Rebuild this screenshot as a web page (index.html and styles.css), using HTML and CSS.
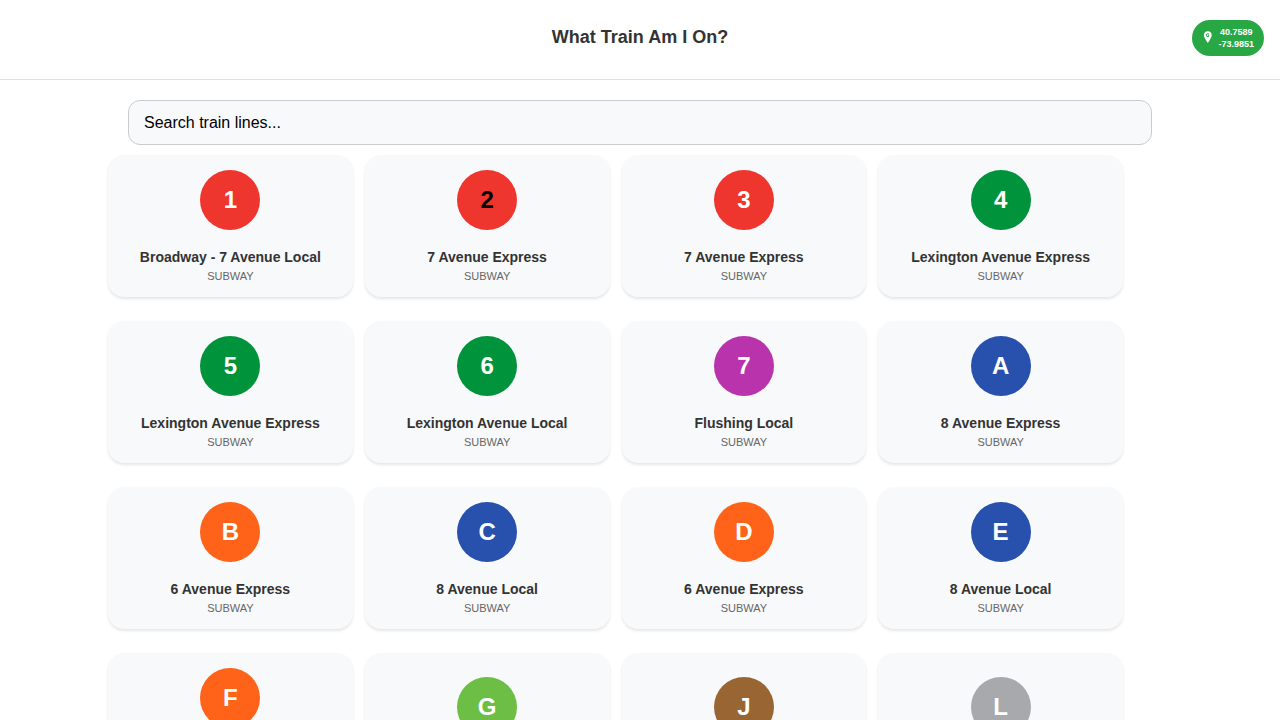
FILE: index.html
```html
<!DOCTYPE html>
<html lang="en">
<head>
<meta charset="utf-8">
<meta name="viewport" content="width=device-width, initial-scale=1">
<title>What Train Am I On?</title>
<link rel="stylesheet" href="styles.css">
</head>
<body>
<div class="app">
  <header class="header">
    <h1 class="title">What Train Am I On?</h1>
    <button class="location" type="button" aria-label="Current location">
      <svg class="pin" viewBox="0 0 12 16" aria-hidden="true">
        <path fill="#fff" d="M5.800 2.200C3.500 2.200 1.900 3.900 1.900 6.100C1.900 9.100 5.800 14 5.800 14C5.800 14 9.700 9.100 9.700 6.100C9.700 3.900 8.100 2.200 5.800 2.200Z"/>
        <path fill="none" stroke="#28a745" stroke-width="1" d="M7 5.300A1.500 1.500 0 1 0 7 7.100M5.800 6.200H7.300"/>
      </svg>
      <span class="coords"><span>40.7589</span><span>-73.9851</span></span>
    </button>
  </header>
  <main class="content">
    <input class="search" type="search" placeholder="Search train lines..." aria-label="Search train lines">
    <div class="lines">
      <button class="card" type="button"><span class="bullet red">1</span><span class="name">Broadway - 7 Avenue Local</span><span class="kind">SUBWAY</span></button>
      <button class="card" type="button"><span class="bullet red dark-text">2</span><span class="name">7 Avenue Express</span><span class="kind">SUBWAY</span></button>
      <button class="card" type="button"><span class="bullet red">3</span><span class="name">7 Avenue Express</span><span class="kind">SUBWAY</span></button>
      <button class="card" type="button"><span class="bullet green">4</span><span class="name">Lexington Avenue Express</span><span class="kind">SUBWAY</span></button>
      <button class="card" type="button"><span class="bullet green">5</span><span class="name">Lexington Avenue Express</span><span class="kind">SUBWAY</span></button>
      <button class="card" type="button"><span class="bullet green">6</span><span class="name">Lexington Avenue Local</span><span class="kind">SUBWAY</span></button>
      <button class="card" type="button"><span class="bullet purple">7</span><span class="name">Flushing Local</span><span class="kind">SUBWAY</span></button>
      <button class="card" type="button"><span class="bullet blue">A</span><span class="name">8 Avenue Express</span><span class="kind">SUBWAY</span></button>
      <button class="card" type="button"><span class="bullet orange">B</span><span class="name">6 Avenue Express</span><span class="kind">SUBWAY</span></button>
      <button class="card" type="button"><span class="bullet blue">C</span><span class="name">8 Avenue Local</span><span class="kind">SUBWAY</span></button>
      <button class="card" type="button"><span class="bullet orange">D</span><span class="name">6 Avenue Express</span><span class="kind">SUBWAY</span></button>
      <button class="card" type="button"><span class="bullet blue">E</span><span class="name">8 Avenue Local</span><span class="kind">SUBWAY</span></button>
      <button class="card" type="button"><span class="bullet orange">F</span><span class="name">Queens Boulevard Express / 6 Avenue Local</span><span class="kind">SUBWAY</span></button>
      <button class="card" type="button"><span class="bullet lime">G</span><span class="name">Brooklyn-Queens Local</span><span class="kind">SUBWAY</span></button>
      <button class="card" type="button"><span class="bullet brown">J</span><span class="name">Nassau Street Local</span><span class="kind">SUBWAY</span></button>
      <button class="card" type="button"><span class="bullet gray">L</span><span class="name">14 Street Local</span><span class="kind">SUBWAY</span></button>
    </div>
  </main>
</div>
</body>
</html>
```
FILE: styles.css
```css
* {
  box-sizing: border-box;
}

body {
  margin: 0;
  background: #fff;
  color: #333;
  font-family: "Liberation Sans", Arial, sans-serif;
}

button,
input {
  font: inherit;
}

.app {
  display: flex;
  flex-direction: column;
  height: 100vh;
}

.header {
  display: grid;
  grid-template-columns: 1fr auto 1fr;
  align-items: start;
  padding: 20px 16px 23px;
  border-bottom: 1px solid #e0e0e0;
}

.title {
  grid-column: 2;
  margin: 0;
  padding-top: 6px;
  font-size: 18px;
  line-height: 22px;
  font-weight: 700;
}

.location {
  display: flex;
  justify-self: end;
  align-items: center;
  gap: 4px;
  padding: 6px 10px;
  border: 0;
  border-radius: 18px;
  background: #28a745;
  color: #fff;
}

.pin {
  width: 12px;
  height: 16px;
  margin-bottom: 2px;
}

.coords {
  display: flex;
  flex-direction: column;
  font-size: 9px;
  line-height: 12px;
  font-weight: 700;
  text-align: center;
}

.content {
  flex: 1;
  min-height: 0;
  overflow-y: auto;
  scrollbar-width: none;
  padding: 20px 10%;
}

.search {
  display: block;
  width: 100%;
  height: 45px;
  padding: 0 15px;
  border: 1px solid #ccc;
  border-radius: 12px;
  background: #f8f9fb;
  color: #000;
  font-size: 16px;
  appearance: none;
}

.search::placeholder {
  color: #000;
  opacity: 1;
}

.lines {
  display: grid;
  grid-template-columns: repeat(4, 1fr);
  gap: 24px 12px;
  margin: 10px 29px 0 -20px;
}

.card {
  display: flex;
  flex-direction: column;
  align-items: center;
  justify-content: center;
  min-width: 0;
  padding: 15px;
  border: 0;
  border-radius: 16px;
  background: #f8f9fb;
  box-shadow: 0 2px 3px rgba(0, 0, 0, 0.1);
  text-align: center;
}

.bullet {
  width: 60px;
  height: 60px;
  margin-bottom: 18px;
  border-radius: 50%;
  color: #fff;
  font-size: 24px;
  line-height: 60px;
  font-weight: 700;
}

.dark-text {
  color: #000;
}

.red { background: #ee352e; }
.green { background: #00933c; }
.purple { background: #b933ad; }
.blue { background: #2850ad; }
.orange { background: #ff6319; }
.lime { background: #6cbe45; }
.brown { background: #996633; }
.gray { background: #a7a9ac; }

.name {
  margin-bottom: 4px;
  color: #333;
  font-size: 14px;
  line-height: 18px;
  font-weight: 700;
}

.kind {
  color: #666;
  font-size: 11px;
  line-height: 12px;
}
```
